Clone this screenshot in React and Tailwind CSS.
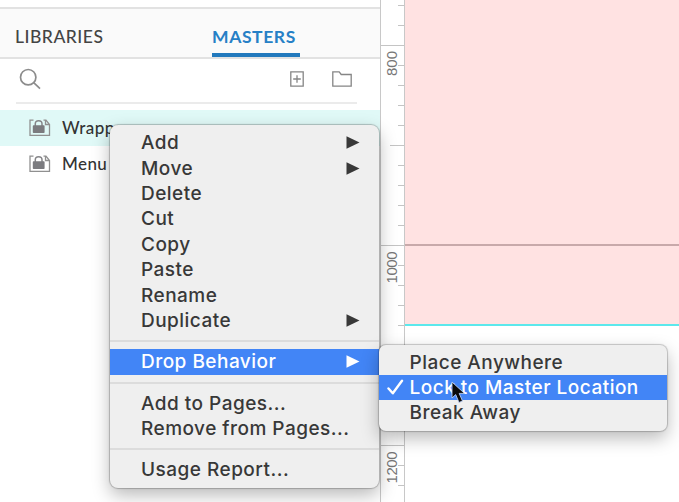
import React from "react";

const MENU_GROUPS = [
  [
    { label: "Add", arrow: true },
    { label: "Move", arrow: true },
    { label: "Delete" },
    { label: "Cut" },
    { label: "Copy" },
    { label: "Paste" },
    { label: "Rename" },
    { label: "Duplicate", arrow: true },
  ],
  [{ label: "Drop Behavior", arrow: true, active: true }],
  [{ label: "Add to Pages..." }, { label: "Remove from Pages..." }],
  [{ label: "Usage Report..." }],
];

const TICKS = Array.from({ length: 25 }, (_, i) => i);

function tickWidth(i) {
  if (i % 10 === 2) return "w-full";
  if (i % 10 === 7) return "w-[14px]";
  return "w-[6px]";
}

function LockedMaster() {
  return (
    <svg className="h-[18px] w-[22px] shrink-0" viewBox="0 0 22 18" fill="none">
      <path d="M4.5 1.2H1V16.3H20.5V5.5L17 1.2H14.5M16.5 1.2V5.5H20.5" stroke="#909090" strokeWidth="1.3" />
      <path d="M6.3 7V4.8C6.3 0.6 13 0.6 13 4.8V7" stroke="#858588" strokeWidth="1.5" />
      <rect x="3.8" y="6.2" width="11.8" height="7.8" rx="0.8" fill="#7b7b7f" />
    </svg>
  );
}

function MasterRow({ label, selected }) {
  return (
    <div className={`flex h-[36px] items-center pl-[29px] ${selected ? "bg-[#e0f9f7]" : ""}`}>
      <LockedMaster />
      <span className="ml-[11px] text-[17px] font-medium tracking-[0.4px] text-[#333]">{label}</span>
    </div>
  );
}

function MenuItem({ label, arrow, active }) {
  return (
    <div
      className={`flex h-[25.4px] items-center justify-between pl-[31px] pr-[18.5px] ${
        active ? "bg-[#4285f6] text-white" : "text-[#383838]"
      }`}
    >
      <span>{label}</span>
      {arrow && (
        <svg className="h-[13px] w-[14px]" viewBox="0 0 14 13" fill="currentColor">
          <path d="M0.5 0.3L13.5 6.5L0.5 12.7Z" />
        </svg>
      )}
    </div>
  );
}

export default function App() {
  return (
    <div className="relative flex h-[502px] w-[679px] overflow-hidden bg-white font-[family-name:Inter,sans-serif]">
      <aside className="flex w-[380px] shrink-0 flex-col pt-[7px] font-[family-name:Lato,sans-serif]">
        <div className="flex h-[52px] border-y-2 border-[#e2e2e2] bg-[#fafafa] pl-[15px] text-[17.5px]">
          <div className="flex w-[197px] items-center pt-[8px]">
            <span className="font-medium tracking-[0.5px] text-[#444]">LIBRARIES</span>
          </div>
          <div className="flex h-[48px] w-[88px] items-center border-b-4 border-[#2279bd] pt-[12px]">
            <span className="font-bold tracking-[0.6px] text-[#2680c6]">MASTERS</span>
          </div>
        </div>
        <div className="mx-[16px] flex h-[45px] w-[341px] items-center border-b-2 border-[#ebebeb] pb-[4px] pl-[3px] pr-[5px]">
          <svg className="h-[22px] w-[22px]" viewBox="0 0 22 22" fill="none" stroke="#8c8c8c" strokeWidth="1.7">
            <circle cx="9.2" cy="9.2" r="7.7" />
            <path d="M14.7 14.7L21 20.6" />
          </svg>
          <svg className="ml-auto h-[16px] w-[14px]" viewBox="0 0 14 16" fill="none" stroke="#858585" strokeWidth="1.3">
            <path d="M0.8 0.8H13.2V15.2H0.8ZM7 4.2V11.8M3.2 8H10.8" />
          </svg>
          <svg className="ml-[28px] h-[16px] w-[20px]" viewBox="0 0 20 16" fill="none" stroke="#858585" strokeWidth="1.3">
            <path d="M0.8 0.8H7.2L9.2 3.5H19.2V15.2H0.8Z" />
          </svg>
        </div>
        <div className="pt-[6px]">
          <MasterRow label="Wrapper" selected />
          <MasterRow label="Menu" />
        </div>
      </aside>

      <div className="relative w-[25px] shrink-0 border-x border-[#c8c8c8]">
        <div className="flex flex-col items-end pt-[5px]">
          {TICKS.map((i) => (
            <div key={i} className="flex h-[20px] w-full shrink-0 justify-end">
              <div className={`h-px bg-[#c4c4c4] ${tickWidth(i)}`} />
            </div>
          ))}
        </div>
        <div className="absolute left-[1px] top-[51px] rotate-180 text-[15px] leading-[20px] text-[#777] [writing-mode:vertical-rl] font-[family-name:Liberation_Sans,sans-serif]">800</div>
        <div className="absolute left-[1px] top-[252px] rotate-180 text-[15px] leading-[20px] tracking-[-0.5px] text-[#777] [writing-mode:vertical-rl] font-[family-name:Liberation_Sans,sans-serif]">1000</div>
        <div className="absolute left-[1px] top-[452px] rotate-180 text-[15px] leading-[20px] tracking-[-0.5px] text-[#777] [writing-mode:vertical-rl] font-[family-name:Liberation_Sans,sans-serif]">1200</div>
      </div>

      <main className="flex flex-1 flex-col">
        <div className="h-[244px] bg-[#ffe2e2]" />
        <div className="h-[2px] bg-[#c8a9aa]" />
        <div className="h-[77.5px] bg-[#ffe2e2]" />
        <div className="h-[2px] bg-[#5ce8ec]" />
      </main>

      <div className="absolute left-[110px] top-[125px] h-[363px] w-[268.5px] rounded-[8px] bg-[#efefef] pt-[5px] text-[19px] font-medium leading-[25px] tracking-[0.48px] shadow-[0_0_1px_1px_rgba(0,0,0,0.22),0_7px_18px_rgba(0,0,0,0.28)]">
        {MENU_GROUPS.map((group, g) => (
          <div key={g}>
            {g > 0 && (
              <div className="flex h-[16px] items-center">
                <div className="h-[2px] w-full bg-[#dcdcdc]" />
              </div>
            )}
            {group.map((item) => (
              <MenuItem key={item.label} {...item} />
            ))}
          </div>
        ))}
      </div>

      <div className="absolute left-[378.5px] top-[344.5px] w-[288.5px] rounded-[7px] bg-[#efefef] pb-[5px] pt-[5px] text-[19px] font-medium leading-[25px] tracking-[0.48px] text-[#383838] shadow-[0_0_1px_1px_rgba(0,0,0,0.2),0_7px_18px_rgba(0,0,0,0.28)]">
        <div className="flex h-[25.4px] items-center pl-[31px]">Place Anywhere</div>
        <div className="flex h-[25.4px] items-center bg-[#4285f6] pl-[8px] text-white">
          <svg className="mr-[6px] h-[17px] w-[17px]" viewBox="0 0 17 17" fill="none" stroke="currentColor" strokeWidth="2.4">
            <path d="M1.5 9.5L5.8 14.3L15 1.8" strokeLinecap="round" strokeLinejoin="round" />
          </svg>
          Lock to Master Location
        </div>
        <div className="flex h-[25.4px] items-center pl-[31px]">Break Away</div>
      </div>

      <svg className="absolute left-[451px] top-[381px] h-[23px] w-[15px]" viewBox="0 0 15 23">
        <path d="M1 1V17L4.7 13.6L8 21.5L11.5 20L8.2 12.4H13.5Z" fill="#0a0a0a" stroke="#b9cdf0" strokeWidth="0.9" />
      </svg>
    </div>
  );
}
